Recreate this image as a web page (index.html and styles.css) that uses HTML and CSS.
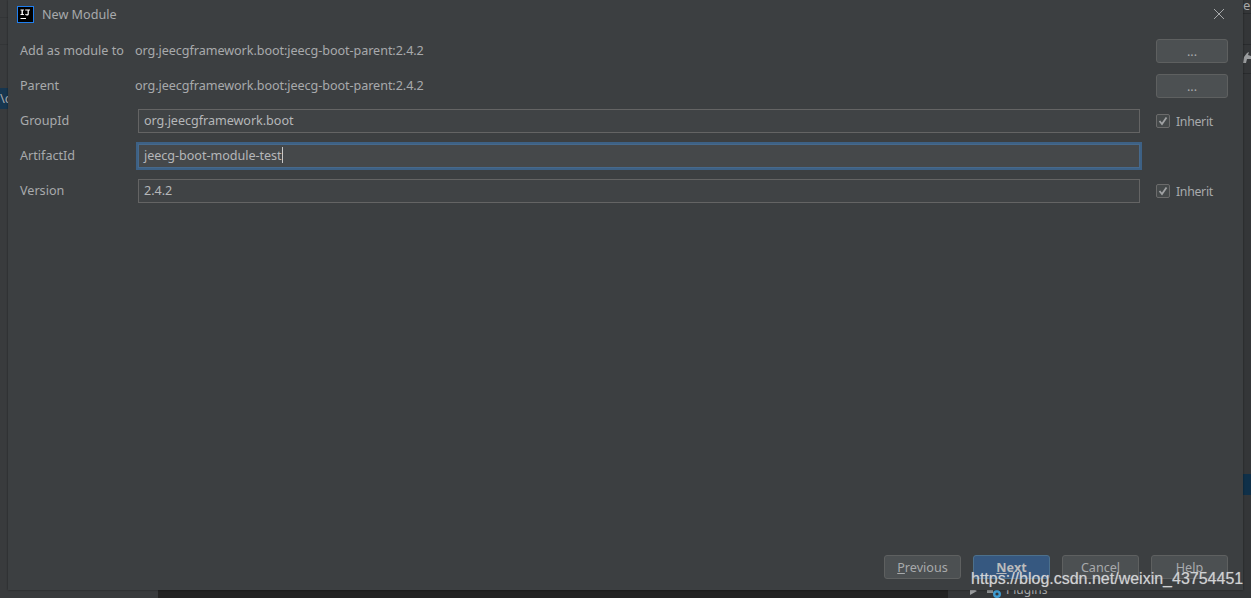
FILE: index.html
```html
<!DOCTYPE html>
<html lang="en">
<head>
<meta charset="utf-8">
<title>New Module</title>
<link rel="stylesheet" href="styles.css">
</head>
<body>
<div class="backdrop">
  <div class="bg-left">
    <span class="bg-left-line l1"></span>
    <span class="bg-left-line l2"></span>
    <span class="bg-tab">\c</span>
  </div>
  <div class="bg-right">
    <span class="bg-e">e</span>
    <span class="bg-line r1"></span>
    <span class="bg-line r2"></span>
    <span class="bg-line r3"></span>
    <svg class="bg-wrench" width="8" height="12" viewBox="0 0 8 12"><path d="M0 11 L1 5 L4 1 L6 0 L5 3 L8 4 L8 7 L4 7 L3 11 Z" fill="#9a9c9e"/></svg>
    <span class="bg-sel"></span>
  </div>
  <div class="bg-bottom">
    <div class="bg-b1"></div>
    <div class="bg-b2"></div>
    <div class="bg-b3">
      <span class="tri"></span>
      <svg class="plug" width="18" height="12" viewBox="0 0 18 12"><rect x="0" y="0" width="6" height="5" fill="#8a8d8f"/><circle cx="10" cy="6" r="2.800" fill="none" stroke="#3f9bd1" stroke-width="2.400"/></svg>
      <span class="plug-text">Plugins</span>
    </div>
  </div>
</div>

<main class="dialog">
  <header class="titlebar">
    <svg class="logo" width="17" height="17" viewBox="0 0 17 17">
      <rect x="0.5" y="0.5" width="16" height="16" fill="#000" stroke="#1f7ff0"/>
      <path d="M3.500 3.500h3.400v1.100H5.900v3.300h1v1.100H3.500V7.900h1V4.600h-1z M8.200 3.500h4.800v1.100h-1.200v3.300c0 1-.7 1.500-1.800 1.500-.9 0-1.500-.4-1.900-1l.8-.7c.3.400.6.600 1 .6.500 0 .7-.3.700-.7V4.600H8.200z" fill="#fff"/>
      <rect x="3.500" y="12" width="5.500" height="1" fill="#fff"/>
    </svg>
    <span class="title">New Module</span>
    <svg class="close" width="12" height="12" viewBox="0 0 12 12"><path d="M1 1 L11 11 M11 1 L1 11" stroke="#a6a8aa" stroke-width="1" fill="none"/></svg>
  </header>

  <section class="form">
    <div class="row">
      <span class="label">Add as module to</span>
      <span class="value">org.jeecgframework.boot:jeecg-boot-parent:2.4.2</span>
      <div class="side"><button class="btn small" type="button"><span class="dots">...</span></button></div>
    </div>
    <div class="row">
      <span class="label">Parent</span>
      <span class="value">org.jeecgframework.boot:jeecg-boot-parent:2.4.2</span>
      <div class="side"><button class="btn small" type="button"><span class="dots">...</span></button></div>
    </div>
    <div class="row">
      <span class="label">GroupId</span>
      <div class="input">org.jeecgframework.boot</div>
      <label class="side check"><span class="box"><svg width="10" height="10" viewBox="0 0 10 10"><path d="M1.500 5 L4 8 L8.500 1.500" stroke="#a0a2a4" stroke-width="1.800" fill="none"/></svg></span>Inherit</label>
    </div>
    <div class="row">
      <span class="label">ArtifactId</span>
      <div class="input focus">jeecg-boot-module-test<span class="caret"></span></div>
      <div class="side"></div>
    </div>
    <div class="row">
      <span class="label">Version</span>
      <div class="input">2.4.2</div>
      <label class="side check"><span class="box"><svg width="10" height="10" viewBox="0 0 10 10"><path d="M1.500 5 L4 8 L8.500 1.500" stroke="#a0a2a4" stroke-width="1.800" fill="none"/></svg></span>Inherit</label>
    </div>
  </section>

  <footer class="actions">
    <button class="btn" type="button"><u>P</u>revious</button>
    <button class="btn primary" type="button"><u>N</u>ext</button>
    <button class="btn" type="button">Cancel</button>
    <button class="btn" type="button">Help</button>
  </footer>
</main>

<div class="watermark">https://blog.csdn.net/weixin_43754451</div>
</body>
</html>
```
FILE: styles.css
```css
* { box-sizing: border-box; }
html, body { margin: 0; padding: 0; }
body {
  width: 1251px;
  height: 598px;
  overflow: hidden;
  position: relative;
  background: #3a3c3e;
  font-family: "Noto Sans", "Noto Sans CJK SC", sans-serif;
  font-size: 12.6px;
  color: #a8aaac;
}
.backdrop { position: absolute; inset: 0; }
.bg-left { position: absolute; left: 0; top: 0; width: 8px; height: 590px; background: #393b3d; overflow: hidden; }
.bg-left-line { position: absolute; left: 0; width: 8px; height: 1px; background: #333537; }
.l1 { top: 17px; }
.l2 { top: 44px; }
.bg-tab { position: absolute; left: 0; top: 88px; width: 8px; height: 21px; background: #17364f; color: #a8aaac; font-size: 13px; line-height: 21px; }
.bg-right { position: absolute; left: 1243px; top: 0; width: 8px; height: 590px; background: #343638; overflow: hidden; }
.bg-e { position: absolute; left: 0; top: -4px; font-size: 13px; color: #a8aaac; }
.bg-line { position: absolute; left: 0; width: 8px; height: 1px; background: #292b2d; }
.r1 { top: 13px; }
.r2 { top: 44px; }
.r3 { top: 73px; }
.bg-wrench { position: absolute; left: 0; top: 52px; }
.bg-sel { position: absolute; left: 0; top: 474px; width: 8px; height: 21px; background: #0f3049; }
.bg-bottom { position: absolute; left: 0; top: 590px; width: 1251px; height: 8px; display: flex; }
.bg-b1 { width: 158px; background: #393b3d; }
.bg-b2 { width: 790px; background: #232323; }
.bg-b3 { flex: 1; background: #343638; position: relative; overflow: hidden; }
.tri { position: absolute; left: 22px; top: -3px; border-left: 7px solid #9a9c9e; border-top: 4px solid transparent; border-bottom: 4px solid transparent; }
.plug { position: absolute; left: 39px; top: -2px; }
.plug-text { position: absolute; left: 58px; top: -9px; font-size: 12px; color: #a8aaac; }

.dialog {
  position: absolute;
  left: 8px;
  top: 0;
  width: 1235px;
  height: 590px;
  background: #3c3f41;
  box-shadow: 0 0 2px rgba(0,0,0,.45);
  display: flex;
  flex-direction: column;
}
.titlebar { height: 28px; display: flex; align-items: center; padding: 0 18px 0 9px; flex: none; }
.logo { flex: none; margin-top: 1px; }
.title { margin-left: 8px; flex: 1; color: #a8aaac; }
.close { flex: none; }

.form { display: flex; flex-direction: column; padding: 11px 15px 0 12px; gap: 11px; flex: 1; }
.row { display: flex; align-items: center; height: 24px; }
.label { width: 115px; flex: none; white-space: nowrap; position: relative; top: -1px; }
.value { flex: 1; white-space: nowrap; letter-spacing: -.06px; position: relative; top: -1px; }
.side { width: 72px; margin-left: 16px; flex: none; }
.input {
  flex: none;
  width: 1002px;
  margin-left: 3px;
  height: 24px;
  border: 1px solid #646464;
  background: #404345;
  padding-left: 5px;
  line-height: 21px;
  color: #b5b7b9;
  white-space: nowrap;
  letter-spacing: -.04px;
}
.input.focus { outline: 2px solid #3d6185; outline-offset: 0; border-color: #46698c; background: #45484a; }
.caret { display: inline-block; width: 1px; height: 16px; background: #c8c8c8; vertical-align: -3px; }
.btn {
  width: 77px;
  height: 24px;
  padding: 1px 0 0;
  background: #4c5052;
  border: 1px solid #5e6060;
  border-radius: 3px;
  color: #a8aaac;
  font: inherit;
  line-height: 20px;
}
.btn.small { width: 72px; display: block; padding: 0; }
.dots { position: relative; top: 1px; }
.btn.primary { background: #365880; border-color: #4c708c; color: #bbbbbb; font-weight: 700; }
.check { display: flex; align-items: center; gap: 6px; letter-spacing: -.3px; font-size: 12.3px; }
.box { width: 14px; height: 14px; border: 1px solid #6b6b6b; border-radius: 2px; background: #45494a; display: flex; align-items: center; justify-content: center; flex: none; }

.actions { display: flex; justify-content: flex-end; gap: 12px; padding: 0 15px 11px 0; flex: none; }

.watermark {
  position: absolute;
  left: 971px;
  top: 569px;
  font-family: "Liberation Sans", sans-serif;
  font-size: 16px;
  line-height: 20px;
  color: #d0d2d4;
  text-shadow: 0 0 1px rgba(210,210,210,.5);
  white-space: nowrap;
}
```
